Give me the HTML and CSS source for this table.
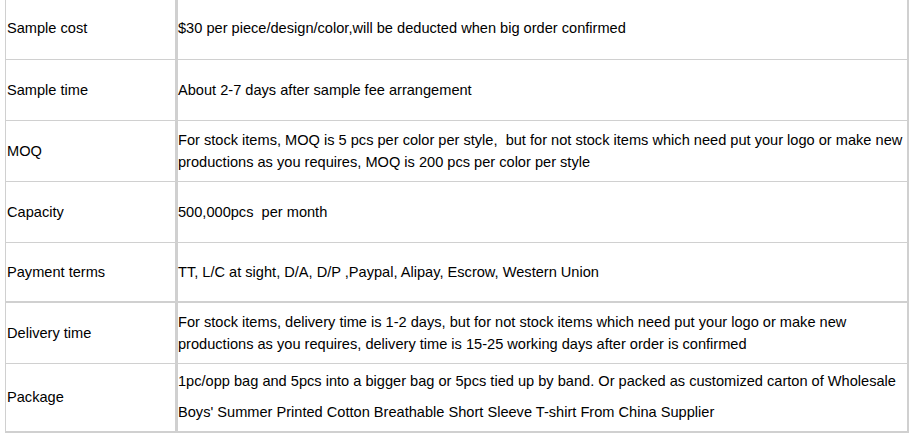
FILE: index.html
```html
<!DOCTYPE html>
<html>
<head>
<meta charset="utf-8">
<link rel="stylesheet" href="styles.css">
</head>
<body>
<table class="spec">
  <tr class="r1"><td class="k">Sample cost</td><td class="v">$30 per piece/design/color,will be deducted when big order confirmed</td></tr>
  <tr><td class="k">Sample time</td><td class="v">About 2-7 days after sample fee arrangement</td></tr>
  <tr><td class="k">MOQ</td><td class="v">For stock items, MOQ is 5 pcs per color per style,&nbsp; but for not stock items which need put your logo or make new productions as you requires, MOQ is 200 pcs per color per style</td></tr>
  <tr><td class="k">Capacity</td><td class="v">500,000pcs&nbsp; per month</td></tr>
  <tr class="thick"><td class="k">Payment terms</td><td class="v">TT, L/C at sight, D/A, D/P ,Paypal, Alipay, Escrow, Western Union</td></tr>
  <tr><td class="k">Delivery time</td><td class="v">For stock items, delivery time is 1-2 days, but for not stock items which need put your logo or make new productions as you requires, delivery time is 15-25 working days after order is confirmed</td></tr>
  <tr class="last"><td class="k">Package</td><td class="v pkg">1pc/opp bag and 5pcs into a bigger bag or 5pcs tied up by band. Or packed as customized carton of Wholesale Boys' Summer Printed Cotton Breathable Short Sleeve T-shirt From China Supplier</td></tr>
</table>
</body>
</html>
```
FILE: styles.css
```css
html, body {
  margin: 0;
  padding: 0;
  background: #fff;
}
.spec {
  margin-left: 5px;
  margin-top: -2px;
  width: 904px;
  border-collapse: collapse;
  font-family: "Liberation Sans", Arial, sans-serif;
  font-size: 14.6px;
  color: #000;
  border-left: 1px solid #d0d0d0;
  border-right: 2px solid #d0d0d0;
  border-bottom: 2px solid #d0d0d0;
}
.spec td {
  border-bottom: 1px solid #d0d0d0;
  padding: 0 2px 0 1px;
  vertical-align: middle;
  line-height: 22px;
}
.spec tr { height: 61px; }
.spec tr.r1 { height: 61px; }
.spec tr.thick { height: 60px; }
.spec tr.thick td { border-bottom: 2px solid #d0d0d0; }
.spec tr.last { height: 69px; }
.spec tr.last td { border-bottom: 2px solid #d0d0d0; }
.spec .k {
  width: 166px;
  border-right: 3px solid #d0d0d0;
}
.spec .v { padding-left: 0; }
.spec .pkg { line-height: 31px; }
```
